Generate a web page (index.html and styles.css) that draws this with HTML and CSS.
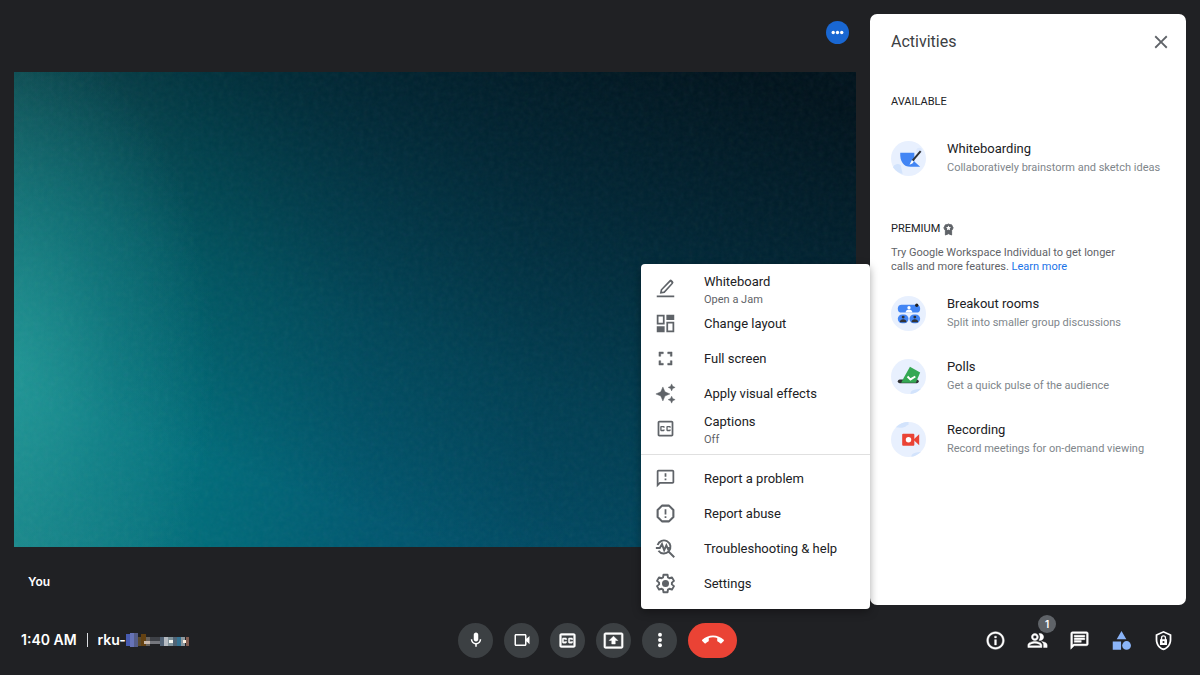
FILE: index.html
```html
<!DOCTYPE html>
<html lang="en">
<head>
<meta charset="utf-8">
<meta name="viewport" content="width=device-width, initial-scale=1">
<title>Meet</title>
<link rel="stylesheet" href="styles.css">
</head>
<body>
<div class="app">
  <div class="content">
    <main class="stage">
      <div class="stage-top">
        <button class="tile-more" aria-label="Tile options">
          <svg viewBox="0 0 24 24" width="24" height="24"><circle cx="6" cy="12" r="2.400"/><circle cx="12" cy="12" r="2.400"/><circle cx="18" cy="12" r="2.400"/></svg>
        </button>
      </div>
      <div class="video">
        <svg class="grain" aria-hidden="true"><filter id="grain"><feTurbulence type="fractalNoise" baseFrequency="0.2" numOctaves="3" seed="4"/></filter><rect width="100%" height="100%" filter="url(#grain)"/></svg>
      </div>
      <div class="name">You</div>
    </main>

    <aside class="panel">
      <header class="panel-head">
        <h1>Activities</h1>
        <button class="close" aria-label="Close"><svg viewBox="0 0 24 24" width="22" height="22"><path d="M19 6.41 17.59 5 12 10.59 6.41 5 5 6.41 10.59 12 5 17.59 6.41 19 12 13.41 17.59 19 19 17.59 13.41 12z"/></svg></button>
      </header>
      <section class="group available">
        <h2>AVAILABLE</h2>
        <button class="activity">
          <svg class="art" viewBox="0 0 36 36"><circle cx="18" cy="18" r="18" fill="#e8f0fe"/><path d="M2 27a5 5 0 0 1 8-2l2 9A18 18 0 0 1 2 27z" fill="#d2e3fc"/><circle cx="29" cy="10" r="3" fill="#dce8fd"/><path d="M9.500 12H24v9l6 5.500H20C13 26.500 9 21 9.500 12z" fill="#4285f4"/><path d="M30.500 10.500 22 20.500" stroke="#303134" stroke-width="2"/><path d="m21.500 19.500 2 1.700-1.500 2-3 1.200z" fill="#fff"/></svg>
          <span class="copy"><span class="label">Whiteboarding</span><span class="desc">Collaboratively brainstorm and sketch ideas</span></span>
        </button>
      </section>
      <section class="group">
        <h2>PREMIUM <svg viewBox="0 0 12 14" width="11" height="13"><path d="M6 1 7.600 1.700 9.400 1.900 10.200 3.500 11 5 10.400 6.700 9.400 8.100V13L6 11.600 2.600 13V8.100L1.600 6.700 1 5l.8-1.500.8-1.600 1.800-.2z" fill="#5f6368" stroke="#5f6368" stroke-linejoin="round"/><path d="m6 2.700.8 1.700 1.900.2-1.400 1.300.4 1.900L6 6.900l-1.700.9.4-1.900-1.400-1.300 1.900-.2z" fill="#fff"/></svg></h2>
        <p>Try Google Workspace Individual to get longer calls and more features. <a href="#">Learn more</a></p>
        <button class="activity">
          <svg class="art" viewBox="0 0 36 36"><circle cx="18" cy="18" r="18" fill="#e8f0fe"/><rect x="7" y="9" width="23" height="8" rx="4" fill="#4285f4"/><circle cx="26.500" cy="9.500" r="1.700" fill="#202124"/><circle cx="18.500" cy="12" r="1.700" fill="#fff"/><path d="M15 17c0-4 7-4 7 0z" fill="#fff"/><rect x="7" y="19" width="11" height="9" rx="4.500" fill="#4285f4"/><rect x="19" y="19" width="11" height="9" rx="4.500" fill="#4285f4"/><g fill="#303134"><circle cx="12.500" cy="21.700" r="1.500"/><path d="M9 27c0-4 7-4 7 0z"/><circle cx="24.500" cy="21.700" r="1.500"/><path d="M21 27c0-4 7-4 7 0z"/></g></svg>
          <span class="copy"><span class="label">Breakout rooms</span><span class="desc">Split into smaller group discussions</span></span>
        </button>
        <button class="activity">
          <svg class="art" viewBox="0 0 36 36"><circle cx="18" cy="18" r="18" fill="#e8f0fe"/><path d="M20 36c0-4 3-5 11-5.500A18 18 0 0 1 20 36z" fill="#d2e3fc"/><rect x="7" y="21" width="21.500" height="4" rx="2" fill="#303134"/><path d="M13 19.500 19.500 8l10.500 6-4.500 10.500H10.500z" fill="#34a853"/><path d="m17 18 3 3 5-3" fill="none" stroke="#fff" stroke-width="2"/></svg>
          <span class="copy"><span class="label">Polls</span><span class="desc">Get a quick pulse of the audience</span></span>
        </button>
        <button class="activity">
          <svg class="art" viewBox="0 0 36 36"><circle cx="18" cy="18" r="18" fill="#e8f0fe"/><path d="M5 5.500A18 18 0 0 1 18 0v3c-3 0-2 4-13 2.500z" fill="#d2e3fc"/><path d="M21 35.700c0-5 6-4 10-5.200a18 18 0 0 1-10 5.200z" fill="#d2e3fc"/><rect x="11.500" y="12" width="12.500" height="12.500" rx="1" fill="#ea4335"/><path d="m23 18.200 6-5.700v11.500z" fill="#ea4335"/><circle cx="18" cy="18.200" r="2.800" fill="#fff"/></svg>
          <span class="copy"><span class="label">Recording</span><span class="desc">Record meetings for on-demand viewing</span></span>
        </button>
      </section>
    </aside>
  </div>

  <footer class="bar">
    <div class="meeting"><span>1:40 AM</span><span class="rule"></span><span class="code">rku-<svg viewBox="0 0 64 14" width="64" height="14" aria-label="Blurred code" role="img"><g shape-rendering="crispEdges"><rect x="0" y="1" width="4" height="12" fill="#475bb0"/><rect x="4" y="0" width="4" height="14" fill="#6673b8"/><rect x="8" y="0" width="4" height="14" fill="#555d88"/><rect x="12" y="4" width="4" height="9" fill="#5b4b2e"/><rect x="15" y="1" width="5" height="12" fill="#634112"/><rect x="20" y="4" width="4" height="9" fill="#66625f"/><rect x="18" y="8" width="6" height="3" fill="#c9b9ad"/><rect x="24" y="4" width="10" height="4" fill="#3e4147"/><rect x="24" y="8" width="10" height="3" fill="#75777d"/><rect x="34" y="4" width="5" height="9" fill="#536477"/><rect x="38" y="4" width="4" height="9" fill="#b5bbc2"/><rect x="42" y="4" width="5" height="9" fill="#81939a"/><rect x="43" y="7" width="4" height="3" fill="#f5f6f1"/><rect x="47" y="4" width="5" height="9" fill="#506475"/><rect x="51" y="4" width="5" height="9" fill="#347393"/><rect x="55" y="4" width="4" height="9" fill="#8e9aa1"/><rect x="57" y="7" width="3" height="3" fill="#f9eedf"/><rect x="60" y="4" width="3" height="9" fill="#835d50"/></g></svg></span></div>

    <div class="controls">
      <button class="round" aria-label="Microphone"><svg viewBox="0 0 24 24"><path d="M12 14c1.660 0 3-1.340 3-3V5c0-1.660-1.340-3-3-3S9 3.340 9 5v6c0 1.660 1.340 3 3 3zm5-3c0 2.760-2.240 5-5 5s-5-2.240-5-5H5c0 3.530 2.610 6.430 6 6.920V21h2v-3.080c3.390-.49 6-3.390 6-6.920h-2z"/></svg></button>
      <button class="round" aria-label="Camera"><svg viewBox="0 0 24 24"><path d="M18 10.480V6c0-1.100-.9-2-2-2H4c-1.100 0-2 .9-2 2v12c0 1.100.9 2 2 2h12c1.100 0 2-.9 2-2v-4.480l4 3.980v-11l-4 3.980zM16 18H4V6h12v12z"/></svg></button>
      <button class="round" aria-label="Captions"><svg class="large bold" viewBox="0 0 24 24"><path d="M19 4H5c-1.100 0-2 .9-2 2v12c0 1.100.9 2 2 2h14c1.100 0 2-.9 2-2V6c0-1.100-.9-2-2-2zm0 14H5V6h14v12zM7 15h3c.55 0 1-.45 1-1v-1H9.500v.5h-2v-3h2v.5H11v-1c0-.55-.45-1-1-1H7c-.55 0-1 .45-1 1v4c0 .55.450 1 1 1zm7 0h3c.55 0 1-.45 1-1v-1h-1.500v.5h-2v-3h2v.5H18v-1c0-.55-.45-1-1-1h-3c-.55 0-1 .45-1 1v4c0 .55.450 1 1 1z"/></svg></button>
      <button class="round" aria-label="Present now"><svg class="large bold" viewBox="0 0 24 24"><path d="M21 3H3c-1.110 0-2 .89-2 2v14c0 1.110.89 2 2 2h18c1.110 0 2-.89 2-2V5c0-1.110-.89-2-2-2zm0 16H3V5h18v14zM10 12H7l5-5 5 5h-3v4h-4z"/></svg></button>
      <button class="round" aria-label="More options" aria-expanded="true"><svg viewBox="0 0 24 24"><circle cx="12" cy="5" r="2.600"/><circle cx="12" cy="12" r="2.600"/><circle cx="12" cy="19" r="2.600"/></svg></button>
      <button class="round hangup" aria-label="Leave call"><svg viewBox="0 0 24 24"><path d="M12 9c-1.600 0-3.150.25-4.600.72v3.100c0 .39-.23.74-.56.9-.98.49-1.870 1.120-2.660 1.850-.18.18-.43.28-.7.28-.28 0-.53-.11-.71-.29L.29 13.080a.96.96 0 0 1-.29-.7c0-.28.110-.53.290-.71C3.340 8.780 7.460 7 12 7s8.660 1.780 11.710 4.670c.18.180.29.430.29.710s-.11.530-.29.710l-2.480 2.480c-.18.180-.43.290-.71.290-.27 0-.52-.11-.7-.28-.79-.74-1.680-1.360-2.660-1.850-.33-.16-.56-.5-.56-.9v-3.100C15.150 9.250 13.600 9 12 9z"/></svg></button>
    </div>

    <div class="tools">
      <button aria-label="Meeting details"><svg class="bold" viewBox="0 0 24 24"><path d="M11 7h2v2h-2zm0 4h2v6h-2zm1-9C6.480 2 2 6.480 2 12s4.480 10 10 10 10-4.480 10-10S17.520 2 12 2zm0 18c-4.410 0-8-3.590-8-8s3.590-8 8-8 8 3.590 8 8-3.590 8-8 8z"/></svg></button>
      <button aria-label="People"><svg class="bold" viewBox="0 0 24 24"><path d="M15 8c0-1.420-.5-2.730-1.330-3.760.42-.14.86-.24 1.330-.24 2.210 0 4 1.790 4 4s-1.790 4-4 4c-.43 0-.84-.09-1.230-.21-.03-.01-.06-.02-.1-.03A5.980 5.980 0 0 0 15 8zm1.660 5.130C18.030 14.060 19 15.320 19 17v3h4v-3c0-2.180-3.580-3.470-6.340-3.870zM9 4c2.210 0 4 1.790 4 4s-1.790 4-4 4-4-1.790-4-4 1.790-4 4-4zm0 2c-1.100 0-2 .9-2 2s.9 2 2 2 2-.9 2-2-.9-2-2-2zm0 7c2.670 0 8 1.340 8 4v3H1v-3c0-2.660 5.330-4 8-4zm0 2c-2.700 0-5.800 1.290-6 2.010V18h12v-1c-.2-.71-3.300-2-6-2z"/></svg><span class="badge">1</span></button>
      <button aria-label="Chat"><svg class="bold" viewBox="0 0 24 24"><path d="M4 4h16v12H5.170L4 17.170V4m0-2c-1.100 0-1.990.9-1.990 2L2 22l4-4h14c1.100 0 2-.9 2-2V4c0-1.100-.9-2-2-2H4zm2 10h8v2H6v-2zm0-3h12v2H6V9zm0-3h12v2H6V6z"/></svg></button>
      <button class="active" aria-label="Activities"><svg viewBox="0 0 24 24"><path d="M12 1 17.500 10.500h-11zM2 13h9.500v9.500H2z"/><circle cx="17.800" cy="17.700" r="5"/></svg></button>
      <button aria-label="Host controls"><svg viewBox="0 0 24 24"><path fill-rule="evenodd" d="M12 1 3 5v6c0 5.550 3.840 10.740 9 12 5.160-1.260 9-6.450 9-12V5zm7 10c0 4.520-2.980 8.690-7 9.930-4.020-1.240-7-5.410-7-9.930V6.300l7-3.110 7 3.110zM8 10.500h1V9a3 3 0 0 1 6 0v1.500h1V17H8zm2.500 0h3V9a1.500 1.500 0 0 0-3 0zM12 12.500a1.200 1.200 0 1 0 0 2.400 1.200 1.200 0 0 0 0-2.400z"/></svg></button>
    </div>
  </footer>

  <div class="menu" role="menu">
    <div class="menu-group">
      <button role="menuitem"><svg viewBox="0 0 24 24"><path d="M2 20h20v2H2zM16.500 2.500a2 2 0 0 1 2.800 0l1.200 1.200a2 2 0 0 1 0 2.800L11 17l-5.500 1L6.500 13zM8.300 13.800l-.5 2 2.200-.3 9-9.900-1.300-1.300z" fill-rule="evenodd"/></svg><span class="copy"><span>Whiteboard</span><small>Open a Jam</small></span></button>
      <button role="menuitem"><svg viewBox="0 0 24 24"><path d="M2 2h9v11H2zm2 2v7h5V4zm9-2h9v6h-9zM2 15h9v7H2zm11-5h9v12h-9zm2 2v8h5v-8z" fill-rule="evenodd"/></svg><span>Change layout</span></button>
      <button role="menuitem"><svg class="bold" viewBox="0 0 24 24"><path d="M6.500 14.500h-2v5h5v-2h-3v-3zm-2-5h2v-3h3v-2h-5v5zm13 8h-3v2h5v-5h-2v3zm-3-13v2h3v3h2v-5h-5z"/></svg><span>Full screen</span></button>
      <button role="menuitem"><svg class="bold" viewBox="0 0 24 24"><path d="M9 4.500 11.400 10.100 17 12.500 11.400 14.900 9 20.500 6.600 14.900 1 12.500 6.600 10.100zM19 1l1.200 2.800L23 5l-2.800 1.200L19 9l-1.200-2.800L15 5l2.800-1.200zM19 15l1.200 2.800L23 19l-2.800 1.200L19 23l-1.200-2.800L15 19l2.800-1.200z"/></svg><span>Apply visual effects</span></button>
      <button role="menuitem"><svg viewBox="0 0 24 24"><path d="M19 3H5c-1.100 0-2 .9-2 2v14c0 1.100.9 2 2 2h14c1.100 0 2-.9 2-2V5c0-1.100-.9-2-2-2zm0 16H5V5h14v14zM7 15h3c.55 0 1-.45 1-1v-1H9.500v.5h-2v-3h2v.5H11v-1c0-.55-.45-1-1-1H7c-.55 0-1 .45-1 1v4c0 .55.450 1 1 1zm7 0h3c.55 0 1-.45 1-1v-1h-1.500v.5h-2v-3h2v.5H18v-1c0-.55-.45-1-1-1h-3c-.55 0-1 .45-1 1v4c0 .55.450 1 1 1z"/></svg><span class="copy"><span>Captions</span><small>Off</small></span></button>
    </div>
    <div class="menu-group">
      <button role="menuitem"><svg viewBox="0 0 24 24"><path d="M20 2H4c-1.100 0-1.990.9-1.990 2L2 22l4-4h14c1.100 0 2-.9 2-2V4c0-1.100-.9-2-2-2zm0 14H5.170L4 17.170V4h16v12zM11 12h2v2h-2zm0-6h2v4h-2z"/></svg><span>Report a problem</span></button>
      <button role="menuitem"><svg viewBox="0 0 24 24"><path d="M8 3h8l5 5v8l-5 5H8l-5-5V8z" fill="none" stroke="currentColor" stroke-width="2.400" stroke-linejoin="round"/><path d="M11 7h2v6h-2zm0 8h2v2h-2z"/></svg><span>Report abuse</span></button>
      <button role="menuitem"><svg viewBox="0 0 24 24"><g fill="none" stroke="currentColor" stroke-width="2.200"><path d="M3 8a7.500 7.500 0 1 1 1 6.500M16 16l6 6"/><path d="M1 11.500h4.500L8 7l2.500 7L13 8.500l2 4.500 1-1.500h1.500"/></g></svg><span>Troubleshooting &amp; help</span></button>
      <button role="menuitem"><svg viewBox="0 0 24 24"><path d="m9.700 2-.5 3-1.700 1-2.900-1-2.300 4 2.400 2v2l-2.400 2 2.300 4 2.900-1 1.700 1 .5 3h4.600l.5-3 1.700-1 2.900 1 2.300-4-2.400-2v-2l2.400-2-2.300-4-2.900 1-1.700-1-.5-3z" fill="none" stroke="currentColor" stroke-width="2.200" stroke-linejoin="round"/><circle cx="12" cy="12" r="4"/></svg><span>Settings</span></button>
    </div>
  </div>
</div>
</body>
</html>
```
FILE: styles.css
```css
* { box-sizing: border-box; }
body { margin: 0; background: #202124; color: #fff; font-family: Roboto, "Liberation Sans", sans-serif; }
button { border: 0; padding: 0; background: none; color: inherit; font: inherit; text-align: left; cursor: pointer; }
svg { display: block; fill: currentColor; flex: none; }
h1, h2, p { margin: 0; font-weight: 400; }
.bold path { stroke: currentColor; stroke-width: 0.5; }

.app { position: relative; min-height: 100vh; display: flex; flex-direction: column; }
.content { flex: 1; display: flex; gap: 14px; padding: 0 14px; }

.stage { flex: 1; display: flex; flex-direction: column; }
.stage-top { height: 72px; display: flex; justify-content: flex-end; align-items: flex-start; padding: 21px 7px 0; }
.tile-more { width: 23px; height: 23px; border-radius: 50%; background: #1967d2; color: #fff; display: grid; place-items: center; }
.tile-more svg { width: 17px; height: 17px; }
.video {
  position: relative; flex: 1; overflow: hidden;
  background:
    radial-gradient(ellipse 24% 70% at 0% 62%, rgba(32, 160, 158, .6), rgba(16, 145, 150, .3) 50%, transparent),
    linear-gradient(200deg, rgba(0, 14, 22, .92) 5%, rgba(0, 20, 30, .7) 28%, rgba(0, 28, 34, .3) 55%, transparent 80%),
    linear-gradient(90deg, #1f8688, #006c7a 22%, #005870 42%, #004c66 62%, #004560);
}
.grain { position: absolute; inset: 0; width: 100%; height: 100%; opacity: .05; }
.name { padding: 27px 14px 15px; font: 600 12px/16px Inter, sans-serif; }

.panel { width: 316px; margin-top: 14px; padding: 16px 21px; border-radius: 7px; background: #fff; color: #202124; }
.panel-head { display: flex; align-items: center; justify-content: space-between; height: 24px; }
.panel-head h1 { font-size: 16px; line-height: 24px; color: #3c4043; }
.close { margin-right: -7px; color: #5f6368; }
.group { display: flex; flex-direction: column; }
.group h2 { display: flex; align-items: center; gap: 3px; font-size: 11px; line-height: 16px; color: #202124; }
.available { margin: 40px 0 42px; }
.group p { max-width: 240px; margin: 9px 0 18px; font-size: 11px; line-height: 14px; color: #5f6368; }
.group a { color: #1a73e8; text-decoration: none; }
.activity { display: flex; align-items: center; gap: 21px; height: 42px; margin-bottom: 21px; }
.available .activity { margin: 27px 0 0; }
.art { width: 35px; height: 35px; }
.copy { display: flex; flex-direction: column; white-space: nowrap; }
.label { font-size: 13px; line-height: 20px; }
.desc { font-size: 11px; line-height: 18px; color: #80868b; }

.bar { height: 70px; display: grid; grid-template-columns: 1fr auto 1fr; align-items: center; padding: 0 26px 0 21px; }
.meeting { display: flex; align-items: center; gap: 10px; font: 600 14px/20px Inter, sans-serif; }
.rule { width: 1px; height: 14px; background: #dadce0; }
.code { display: flex; align-items: center; }
.controls { display: flex; gap: 11px; }
.round { width: 35px; height: 35px; border-radius: 18px; background: #3c4043; display: grid; place-items: center; }
.round svg { width: 18px; height: 18px; }
.round .large { width: 21px; height: 21px; }
.hangup { width: 49px; background: #ea4335; }
.round.hangup svg { width: 22px; height: 22px; }
.tools { display: flex; justify-content: flex-end; gap: 21px; }
.tools button { position: relative; }
.tools svg { width: 21px; height: 21px; }
.tools .active { color: #8ab4f8; }
.badge { position: absolute; right: -8px; bottom: 18px; width: 18px; height: 18px; border-radius: 50%; background: #5f6368; font: 600 10px/18px Inter, sans-serif; text-align: center; }

.menu { position: absolute; right: 330px; bottom: 66px; width: 229px; padding: 7px 0 8px; border-radius: 4px; background: #fff; color: #202124; box-shadow: 0 3px 8px rgba(0, 0, 0, .35); font-size: 13px; line-height: 18px; }
.menu-group { display: flex; flex-direction: column; }
.menu-group + .menu-group { margin-top: 8px; padding-top: 6px; border-top: 1px solid #e0e0e0; }
.menu button { display: flex; align-items: center; gap: 28px; height: 35px; padding: 0 14px; white-space: nowrap; }
.menu svg { width: 21px; height: 21px; color: #5f6368; }
.menu .copy { padding-top: 4px; }
.menu small { font-size: 11px; line-height: 18px; color: #5f6368; }
```
